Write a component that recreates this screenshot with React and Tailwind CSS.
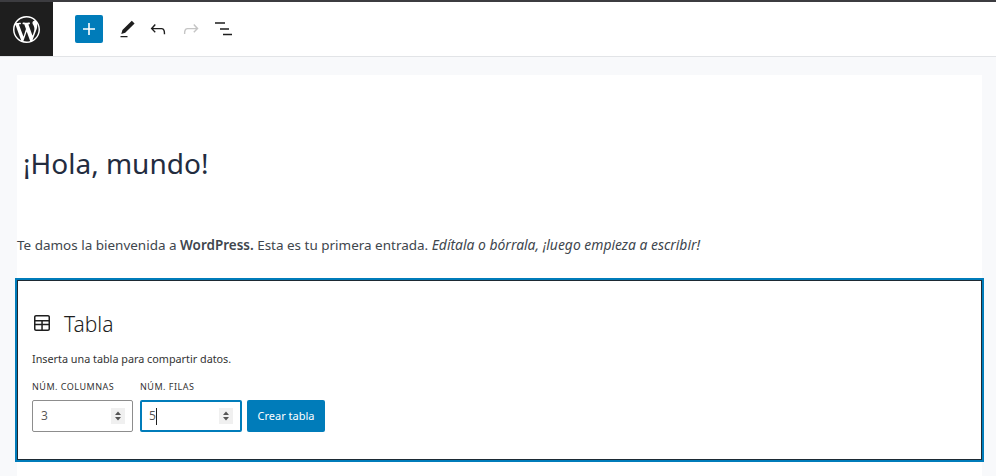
import React from 'react';

function Spinner({ focused }) {
  return (
    <div className={`flex items-center justify-between bg-white rounded-[2px] h-8 ${focused ? 'w-[102px] border-2 border-[#007cba] pl-[7px] pr-[7px]' : 'w-[101px] border border-[#8d8d8d] pl-2 pr-[7px]'}`}>
      <span className="flex items-center text-[12px] text-[#555] font-['Open_Sans',sans-serif]">
        {focused ? '5' : '3'}
        {focused && <span className="w-px h-[17px] bg-[#1e1e1e]" />}
      </span>
      <svg width="14" height="16" viewBox="0 0 14 16" className="bg-[#f0f0f0]">
        <path d="M7 3.5l3 3.5H4z" fill="#555" />
        <path d="M7 12.5l3-3.5H4z" fill="#555" />
      </svg>
    </div>
  );
}

export default function App() {
  return (
    <div className="w-[996px] h-[476px] overflow-hidden bg-[#f8f9fb] font-['Noto_Sans',sans-serif] flex flex-col">
      {/* Top bar */}
      <div className="h-[2px] bg-[#3c3c40]" />
      <header className="h-[55px] shrink-0 bg-white border-b border-[#e2e4e7] flex items-center">
        <div className="w-[53px] h-[54px] bg-[#1e1e1e] flex items-center justify-center">
          <svg width="27" height="27" viewBox="0 0 20 20" fill="#fff" className="-ml-px">
            <path d="M20 10c0-5.51-4.49-10-10-10C4.48 0 0 4.49 0 10c0 5.52 4.48 10 10 10 5.51 0 10-4.48 10-10zM7.78 15.37L4.37 6.22c.55-.02 1.17-.08 1.17-.08.5-.06.44-1.13-.06-1.11 0 0-1.45.11-2.37.11-.18 0-.37 0-.58-.01C4.12 2.69 6.87 1.11 10 1.11c2.33 0 4.45.87 6.05 2.34-.68-.11-1.65.39-1.65 1.58 0 .74.45 1.36.9 2.1.35.61.55 1.36.55 2.46 0 1.49-1.4 5-1.4 5l-3.03-8.37c.54-.02.82-.17.82-.17.5-.05.44-1.25-.06-1.22 0 0-1.44.12-2.38.12-.87 0-2.33-.12-2.33-.12-.5-.03-.56 1.2-.06 1.22l.92.08 1.26 3.41zM17.41 10c.24-.64.74-1.87.43-4.25.7 1.29 1.05 2.71 1.05 4.25 0 3.29-1.73 6.24-4.4 7.78.97-2.59 1.94-5.2 2.92-7.78zM6.1 18.09C3.12 16.65 1.11 13.53 1.11 10c0-1.3.23-2.48.72-3.59C3.25 10.3 4.67 14.2 6.1 18.09zm4.03-6.63l2.58 6.98c-.86.29-1.76.45-2.71.45-.79 0-1.57-.11-2.29-.33.81-2.38 1.62-4.74 2.42-7.1z" />
          </svg>
        </div>
        <div className="ml-[22px] w-7 h-7 rounded-[2px] bg-[#007cba] flex items-center justify-center">
          <svg width="14" height="14" viewBox="0 0 14 14" fill="#fff">
            <path d="M6.2 1h1.6v5.2H13v1.6H7.8V13H6.2V7.8H1V6.2h5.2z" />
          </svg>
        </div>
        <svg width="21" height="21" viewBox="0 0 24 24" fill="#1e1e1e" className="ml-[14px]">
          <path d="M20.1 5.1L16.9 2 6.2 12.7l-1.3 4.4 4.5-1.3L20.1 5.1zM4 20.8h8v-1.5H4v1.5z" />
        </svg>
        <svg width="22" height="22" viewBox="0 0 24 24" fill="#1e1e1e" className="ml-[9px]">
          <path d="M18.3 11.7c-.6-.6-1.4-.9-2.3-.9H6.7l2.9-3.3-1.1-1-4.5 5L8.5 16l1-1-2.7-2.7H16c.5 0 .9.2 1.3.5 1 1 1 3.4 1 4.5v.3h1.5v-.2c0-1.5 0-4.3-1.5-5.7z" />
        </svg>
        <svg width="22" height="22" viewBox="0 0 24 24" fill="#c5c5c5" className="ml-[11px]">
          <path d="M15.6 6.5l-1.1 1 2.9 3.3H8c-.9 0-1.7.3-2.3.9-1.4 1.5-1.4 4.2-1.4 5.6v.2h1.5v-.3c0-1.1 0-3.5 1-4.5.3-.3.7-.5 1.3-.5h9.2L14.5 15l1.1 1.1 4.6-4.6-4.6-5z" />
        </svg>
        <svg width="24" height="24" viewBox="0 0 24 24" fill="#1e1e1e" className="ml-[9px]">
          <path d="M4 5.2h10v1.5H4zM9 11.2h9v1.5H9zM12 16.8h9v1.5h-9z" />
        </svg>
      </header>

      {/* Editor canvas */}
      <main className="flex-1 ml-[17px] mr-[14px] mt-[18px] bg-white">
        <h1 className="ml-[6px] mt-[69px] text-[28px] leading-[38px] text-[#232c3f] font-normal">¡Hola, mundo!</h1>
        <p className="mt-[53px] text-[13.47px] leading-5 text-[#40464d] whitespace-nowrap">
          Te damos la bienvenida a <strong className="font-semibold">WordPress.</strong> Esta es tu primera entrada. <em className="text-[13.9px]">Edítala o bórrala, ¡luego empieza a escribir!</em>
        </p>

        {/* Table placeholder */}
        <div className="-mx-[2px] mt-[23px] h-[184px] border-2 border-[#007cba]">
          <div className="h-full border border-[#1e2a33] pl-[14px] pt-[28px]">
            <div className="flex items-center gap-[10px]">
              <svg width="24" height="24" viewBox="0 0 24 24" fill="#1e1e1e" className="-ml-[2px] -mt-[2px]">
                <path d="M4 6v12c0 1.1.9 2 2 2h12c1.1 0 2-.9 2-2V6c0-1.1-.9-2-2-2H6c-1.1 0-2 .9-2 2zm1.5 0c0-.3.2-.5.5-.5h12c.3 0 .5.2.5.5v3h-13V6zm0 4.5h5.8v2.2H5.5zm7.3 0h5.7v2.2h-5.7zM5.5 14.2h5.8v4.3H6c-.3 0-.5-.2-.5-.5zm7.3 0h5.7V18c0 .3-.2.5-.5.5h-5.2z" />
              </svg>
              <span className="text-[21px] leading-[30px] text-[#1e1e1e] font-light">Tabla</span>
            </div>
            <p className="mt-[12px] text-[10.8px] leading-4 text-[#333]">Inserta una tabla para compartir datos.</p>
            <div className="mt-[14px] flex items-end">
              <div className="flex flex-col gap-[7px]">
                <label className="text-[9px] leading-3 text-[#333] uppercase tracking-[0.5px]">Núm. columnas</label>
                <Spinner />
              </div>
              <div className="ml-[7px] flex flex-col gap-[7px]">
                <label className="text-[9px] leading-3 text-[#333] uppercase tracking-[0.5px]">Núm. filas</label>
                <Spinner focused />
              </div>
              <button className="ml-[5px] h-8 w-[78px] rounded-[2px] bg-[#007cba] text-white text-[11px]">Crear tabla</button>
            </div>
          </div>
        </div>
      </main>
    </div>
  );
}
